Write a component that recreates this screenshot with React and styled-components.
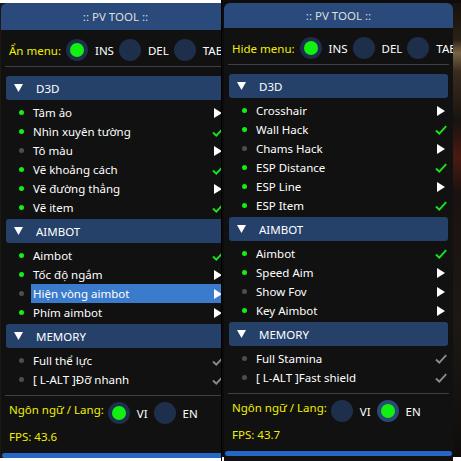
import React from 'react'
import styled, { createGlobalStyle } from 'styled-components'

const GlobalStyle = createGlobalStyle`
  html, body {
    margin: 0;
    padding: 0;
    background: #ffffff;
  }
  body {
    font-family: "Noto Sans", "DejaVu Sans", sans-serif;
    font-size: 11.5px;
    color: #ffffff;
  }
`

const sections = [
  {
    title: 'D3D',
    items: [
      { vi: 'Tâm ảo', en: 'Crosshair', on: true, icon: 'arrow' },
      { vi: 'Nhìn xuyên tường', en: 'Wall Hack', on: true, icon: 'check' },
      { vi: 'Tô màu', en: 'Chams Hack', on: false, icon: 'arrow' },
      { vi: 'Vẽ khoảng cách', en: 'ESP Distance', on: true, icon: 'check' },
      { vi: 'Vẽ đường thẳng', en: 'ESP Line', on: true, icon: 'arrow' },
      { vi: 'Vẽ item', en: 'ESP Item', on: true, icon: 'check' },
    ],
  },
  {
    title: 'AIMBOT',
    items: [
      { vi: 'Aimbot', en: 'Aimbot', on: true, icon: 'check' },
      { vi: 'Tốc độ ngắm', en: 'Speed Aim', on: true, icon: 'arrow' },
      { vi: 'Hiện vòng aimbot', en: 'Show Fov', on: false, icon: 'arrow', hot: 'vi' },
      { vi: 'Phím aimbot', en: 'Key Aimbot', on: true, icon: 'arrow' },
    ],
  },
  {
    title: 'MEMORY',
    items: [
      { vi: 'Full thể lực', en: 'Full Stamina', on: false, icon: 'grey' },
      { vi: '[ L-ALT ]Đỡ nhanh', en: '[ L-ALT ]Fast shield', on: false, icon: 'grey' },
    ],
  },
]

function Arrow() {
  return (
    <svg width="8" height="10" viewBox="0 0 8 10">
      <polygon points="0,0 8,5 0,10" fill="#ffffff" />
    </svg>
  )
}

function Check({ color }) {
  return (
    <svg width="12" height="10" viewBox="0 0 12 10">
      <polyline points="1,5.5 4.3,8.6 11.2,1.2" fill="none" stroke={color} strokeWidth="1.9" />
    </svg>
  )
}

function DownTri() {
  return (
    <svg width="9" height="8" viewBox="0 0 9 8">
      <polygon points="0,0 9,0 4.5,8" fill="#ffffff" />
    </svg>
  )
}

function Radio({ checked, ring }) {
  return (
    <RadioCircle $ring={ring}>
      {checked && <RadioDot />}
    </RadioCircle>
  )
}

function Panel({ lang, headerH, fps }) {
  const vi = lang === 'vi'
  return (
    <Window>
      <TitleBar $h={headerH}>:: PV TOOL ::</TitleBar>
      <Body>
        <RadioRow>
          <Yellow>{vi ? 'Ẩn menu:' : 'Hide menu:'}</Yellow>
          <RadioGroup>
            <RadioItem><Radio checked />INS</RadioItem>
            <RadioItem><Radio />DEL</RadioItem>
            <RadioItem><Radio />TAB</RadioItem>
          </RadioGroup>
        </RadioRow>
        <Separator $top={5} />

        {sections.map((sec, i) => (
          <React.Fragment key={sec.title}>
            <SectionHeader $first={i === 0}>
              <DownTri />
              <span>{sec.title}</span>
            </SectionHeader>
            <ItemList>
              {sec.items.map(item => (
                <ItemRow key={item.en}>
                  <Bullet $on={item.on} />
                  <ItemBody $hot={item.hot === lang}>
                    <span>{vi ? item.vi : item.en}</span>
                    <IconBox>
                      {item.icon === 'arrow' && <Arrow />}
                      {item.icon === 'check' && <Check color="#19e619" />}
                      {item.icon === 'grey' && <Check color="#8c8c8c" />}
                    </IconBox>
                  </ItemBody>
                </ItemRow>
              ))}
            </ItemList>
          </React.Fragment>
        ))}

        <Separator $top={6} />
        <LangRow>
          <LangLabel>Ngôn ngữ / Lang:</LangLabel>
          <RadioGroup $gap={6}>
            <RadioItem><Radio checked={vi} />VI</RadioItem>
            <RadioItem><Radio checked={!vi} ring={!vi} />EN</RadioItem>
          </RadioGroup>
        </LangRow>
        <Fps>FPS: {fps}</Fps>
      </Body>
      <BottomBar />
    </Window>
  )
}

export default function App() {
  return (
    <>
      <GlobalStyle />
      <Screen>
        <LeftClip>
          <Panel lang="vi" headerH={27} fps="43.6" />
        </LeftClip>
        <Gap />
        <RightSide>
          <Panel lang="en" headerH={25} fps="43.7" />
          <Scene />
        </RightSide>
      </Screen>
    </>
  )
}

const Screen = styled.div`
  display: flex;
  width: 461px;
  height: 461px;
  overflow: hidden;
`

const LeftClip = styled.div`
  width: 222px;
  flex: none;
  overflow: hidden;
  padding: 3px 0 0 1px;
  box-sizing: border-box;
  border-right: 1px solid #000;
  background: linear-gradient(#ffffff 0 3px, #1c1814 3px 458px, #ffffff 458px);
`

const Gap = styled.div`
  width: 2px;
  flex: none;
  background: linear-gradient(#0c0c0c 0 457px, #ffffff 457px);
`

const RightSide = styled.div`
  display: flex;
  flex: 1;
  padding-top: 3px;
  background: linear-gradient(#0e0d0c 0 457px, #ffffff 457px);
`

const Scene = styled.div`
  flex: 1;
  height: 454px;
  background: linear-gradient(
    180deg,
    #16120e 0,
    #2a2016 8%,
    #7a6448 11%,
    #3a2c20 15%,
    #18130f 26%,
    #4a1a12 34%,
    #1a1210 42%,
    #1d1813 70%,
    #0f0d0c 100%
  );
`

const Window = styled.div`
  width: 229px;
  flex: none;
  display: flex;
  flex-direction: column;
  background: #111111;
  border-radius: 6px 6px 0 0;
`

const TitleBar = styled.div`
  height: ${p => p.$h}px;
  display: flex;
  align-items: center;
  justify-content: center;
  background: #294a7a;
  color: #dedede;
  border-radius: 6px 6px 0 0;
`

const Body = styled.div`
  padding: 9px 4px 0 4px;
  display: flex;
  flex-direction: column;
`

const RadioRow = styled.div`
  display: flex;
  align-items: center;
  height: 22px;
  padding-left: 4px;
  gap: 5px;
`

const Yellow = styled.span`
  color: #f0f000;
  white-space: nowrap;
`

const RadioGroup = styled.div`
  display: flex;
  align-items: center;
  gap: ${p => p.$gap ?? 5}px;
`

const RadioItem = styled.div`
  display: flex;
  align-items: center;
  gap: 7px;
  white-space: nowrap;
`

const RadioCircle = styled.div`
  width: 22px;
  height: 22px;
  flex: none;
  border-radius: 50%;
  background: ${p => (p.$ring ? '#2a4a72' : '#1d2f4a')};
  display: flex;
  align-items: center;
  justify-content: center;
`

const RadioDot = styled.div`
  width: 14px;
  height: 14px;
  border-radius: 50%;
  background: #12f012;
`

const Separator = styled.div`
  height: 1px;
  margin-top: ${p => p.$top}px;
  background: #3e3e48;
`

const SectionHeader = styled.div`
  height: 24px;
  margin: ${p => (p.$first ? '9px' : '2px')} 1px 0 1px;
  padding-left: 8px;
  display: flex;
  align-items: center;
  gap: 13px;
  background: #25416a;
  border-radius: 3px;
  white-space: nowrap;
`

const ItemList = styled.div`
  margin-top: 3px;
  display: flex;
  flex-direction: column;
`

const ItemRow = styled.div`
  height: 19px;
  display: flex;
  align-items: center;
  padding-left: 14px;
`

const Bullet = styled.div`
  width: 5px;
  height: 5px;
  flex: none;
  border-radius: 50%;
  background: ${p => (p.$on ? '#12f012' : '#4e4e4e')};
`

const ItemBody = styled.div`
  flex: 1;
  height: 100%;
  margin-left: 7px;
  padding: 0 1px 0 2px;
  display: flex;
  align-items: center;
  justify-content: space-between;
  white-space: nowrap;
  background: ${p => (p.$hot ? '#3a7bcc' : 'transparent')};
`

const IconBox = styled.div`
  width: 14px;
  display: flex;
  align-items: center;
  justify-content: center;
`

const LangRow = styled.div`
  display: flex;
  align-items: flex-start;
  margin-top: 6px;
  padding-left: 4px;
  gap: 4px;
`

const LangLabel = styled(Yellow)`
  line-height: 15px;
`

const Fps = styled.div`
  margin-top: 5px;
  padding-left: 4px;
  line-height: 16px;
  color: #f0f000;
`

const BottomBar = styled.div`
  height: 5px;
  margin: 8px 1px 0 1px;
  background: #2566c6;
  border-radius: 3px;
`
